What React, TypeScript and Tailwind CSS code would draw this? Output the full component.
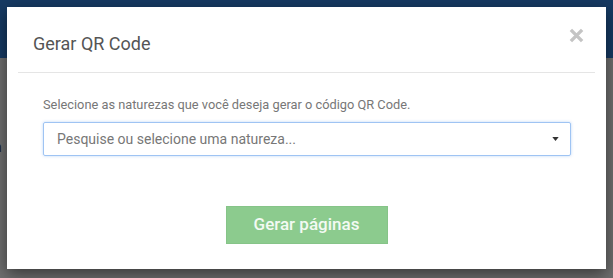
export default function App() {
  return (
    <div className="relative h-[278px] w-[613px] overflow-hidden bg-[#6f6f6f] font-['Roboto',sans-serif]">
      {/* page behind the backdrop */}
      <div className="h-[58px] bg-[#163a63]" />
      <div className="pt-[80px] text-[14px] leading-[18px] text-[#1e1e1e]">
        <span className="ml-[-6px]">n</span>
      </div>

      {/* modal */}
      <div className="absolute left-[7px] top-[7px] flex h-[262px] w-[599px] flex-col bg-white shadow-[0_5px_15px_rgba(0,0,0,0.5)]">
        <div className="flex h-[65px] items-start justify-between pl-[26px] pr-[22px] pt-[25px]">
          <h4 className="text-[18px] leading-[24px] text-[#555]">Gerar QR Code</h4>
          <button className="mt-[-4px] text-[#c4c4c4]" aria-label="Fechar">
            <svg viewBox="0 0 16 16" className="h-[15px] w-[15px]" fill="none" stroke="currentColor" strokeWidth="3.6">
              <path d="M2 2l12 12M14 2L2 14" />
            </svg>
          </button>
        </div>
        <div className="mx-[11px] h-px bg-[#e5e5e5]" />

        <div className="flex flex-col pl-[36px] pr-[35px] pt-[23px]">
          <p className="text-[12.8px] leading-[18px] text-[#777]">
            Selecione as naturezas que você deseja gerar o código QR Code.
          </p>
          <div className="mt-[8px] flex h-[34px] items-center justify-between rounded-[2px] border border-[#9fc4f3] pl-[13px] pr-[11px] shadow-[0_0_3px_rgba(102,160,235,0.45)]">
            <span className="text-[14px] text-[#777]">Pesquise ou selecione uma natureza...</span>
            <svg viewBox="0 0 8 5" className="h-[4px] w-[7px] text-[#333]" fill="currentColor">
              <path d="M0 0h8L4 5z" />
            </svg>
          </div>
        </div>

        <div className="mt-[50px] flex justify-center">
          <button className="h-[38px] w-[162px] border border-[#86c488] bg-[#8ccb8e] text-[17px] font-medium text-[#f3faf3]">
            Gerar páginas
          </button>
        </div>
      </div>
    </div>
  );
}
